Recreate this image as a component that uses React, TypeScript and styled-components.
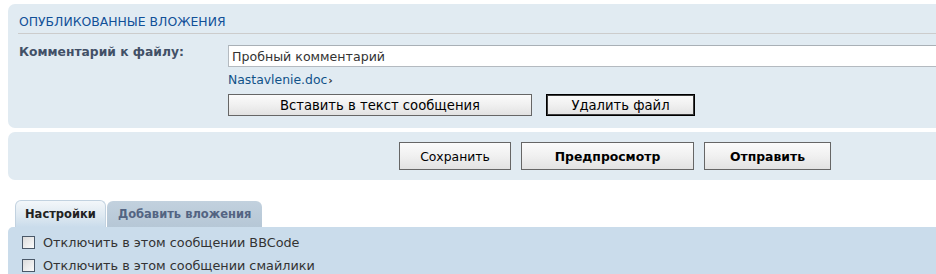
import * as React from 'react'
import styled, { createGlobalStyle, css } from 'styled-components'

const Global = createGlobalStyle`
  html, body {
    margin: 0;
    padding: 0;
    overflow: hidden;
    background: #fff;
  }
  body {
    padding: 4px 0 0 8px;
    font-family: 'DejaVu Sans', Verdana, sans-serif;
    color: #333;
  }
`

const Page = styled.div`
  width: 1000px;
`

const Panel = styled.div<{ $tone?: 'light' | 'dark' }>`
  background: ${ p => p.$tone === 'dark' ? '#cadceb' : '#e1ebf2' };
  border-radius: 7px;
  margin-bottom: 4px;
`

const AttachPanel = styled(Panel)`
  padding: 10px 10px 12px 10px;
`

const Heading = styled.h3`
  margin: 0 0 11px 0;
  padding: 0 0 3px 1px;
  font-size: 12.4px;
  line-height: 16px;
  font-weight: normal;
  text-transform: uppercase;
  color: #115098;
  border-bottom: 1px solid #ccc;
`

const Row = styled.div`
  display: grid;
  grid-template-columns: 210px 1fr;
  align-items: start;
`

const Label = styled.label`
  padding: 0 0 0 1px;
  font-size: 12.3px;
  line-height: 15px;
  font-weight: bold;
  color: #425067;
`

const Field = styled.div`
  display: flex;
  flex-direction: column;
  align-items: flex-start;
`

const Input = styled.input`
  box-sizing: border-box;
  width: 100%;
  height: 22px;
  margin: 0;
  padding: 0 3px;
  border: 1px solid #b4bac0;
  border-top-color: #a9b0b6;
  background: #fff;
  font-family: inherit;
  font-size: 12.6px;
  color: #333;
`

const FileLink = styled.a`
  display: block;
  height: 15px;
  margin: 5px 0 7px 0;
  font-size: 12.4px;
  line-height: 15px;
  color: #105289;
  text-decoration: none;
  &::after {
    content: '›';
    color: #333;
    font-weight: bold;
    font-size: 11px;
    line-height: 0;
    margin-left: 1px;
  }
`

const Buttons = styled.div<{ $gap: number }>`
  display: flex;
  gap: ${ p => p.$gap }px;
`

const Button = styled.button<{ $w: number; $h: number; $bold?: boolean; $focus?: boolean; $size?: number }>`
  box-sizing: border-box;
  width: ${ p => p.$w }px;
  height: ${ p => p.$h }px;
  padding: 0;
  font-family: inherit;
  font-size: ${ p => p.$size ?? 12.4 }px;
  font-weight: ${ p => p.$bold ? 'bold' : 'normal' };
  color: #000;
  background: linear-gradient(to bottom, #fbfbfb 0%, #f0f0f0 50%, #e2e2e2 100%);
  border: 1px solid #666;
  ${ p => p.$focus && css`
    border-color: #000;
    box-shadow: inset 0 0 0 1px #3a3a3a;
  ` }
`

const SubmitPanel = styled(Panel)`
  display: flex;
  padding: 10px 0 10px 391px;
`

const Tabs = styled.div`
  display: flex;
  gap: 1px;
  margin: 20px 0 0 7px;
  align-items: flex-end;
`

const Tab = styled.div<{ $active?: boolean }>`
  box-sizing: border-box;
  height: ${ p => p.$active ? 27 : 26 }px;
  padding: 0 ${ p => p.$active ? 9 : 11 }px;
  display: flex;
  align-items: center;
  border-radius: 6px 6px 0 0;
  font-size: 11.5px;
  font-weight: bold;
  ${ p => p.$active ? css`
    color: #222;
    background: linear-gradient(to bottom, #f3f7fa 0%, #dde8f1 60%, #cadceb 100%);
    border: 1px solid #c2d2e0;
    border-bottom: none;
  ` : css`
    color: #536482;
    background: linear-gradient(to bottom, #c2d1de 0%, #b6c7d6 100%);
  ` }
`

const OptionsPanel = styled(Panel)`
  border-radius: 5px 0 0 0;
  padding: 4px 14px 6px 14px;
  margin: 0;
`

const Option = styled.label`
  display: flex;
  align-items: center;
  gap: 8px;
  height: 23px;
  font-size: 12.8px;
  color: #333;
`

const Check = styled.span`
  box-sizing: border-box;
  width: 13px;
  height: 13px;
  border: 1px solid #4a5868;
  background: linear-gradient(to bottom right, #dcdcdc 0%, #fbfbfb 100%);
`

export default function App() {
  return (
    <Page>
      <Global/>
      <AttachPanel>
        <Heading>Опубликованные вложения</Heading>
        <Row>
          <Label>Комментарий к файлу:</Label>
          <Field>
            <Input defaultValue="Пробный комментарий"/>
            <FileLink href="#">Nastavlenie.doc</FileLink>
            <Buttons $gap={ 14 }>
              <Button $w={ 304 } $h={ 22 } $size={ 13.2 }>Вставить в текст сообщения</Button>
              <Button $w={ 149 } $h={ 22 } $size={ 13.2 } $focus>Удалить файл</Button>
            </Buttons>
          </Field>
        </Row>
      </AttachPanel>
      <SubmitPanel>
        <Buttons $gap={ 10 }>
          <Button $w={ 112 } $h={ 28 }>Сохранить</Button>
          <Button $w={ 173 } $h={ 28 } $bold>Предпросмотр</Button>
          <Button $w={ 127 } $h={ 28 } $bold>Отправить</Button>
        </Buttons>
      </SubmitPanel>
      <Tabs>
        <Tab $active>Настройки</Tab>
        <Tab>Добавить вложения</Tab>
      </Tabs>
      <OptionsPanel $tone="dark">
        <Option><Check/>Отключить в этом сообщении BBCode</Option>
        <Option><Check/>Отключить в этом сообщении смайлики</Option>
      </OptionsPanel>
    </Page>
  )
}
